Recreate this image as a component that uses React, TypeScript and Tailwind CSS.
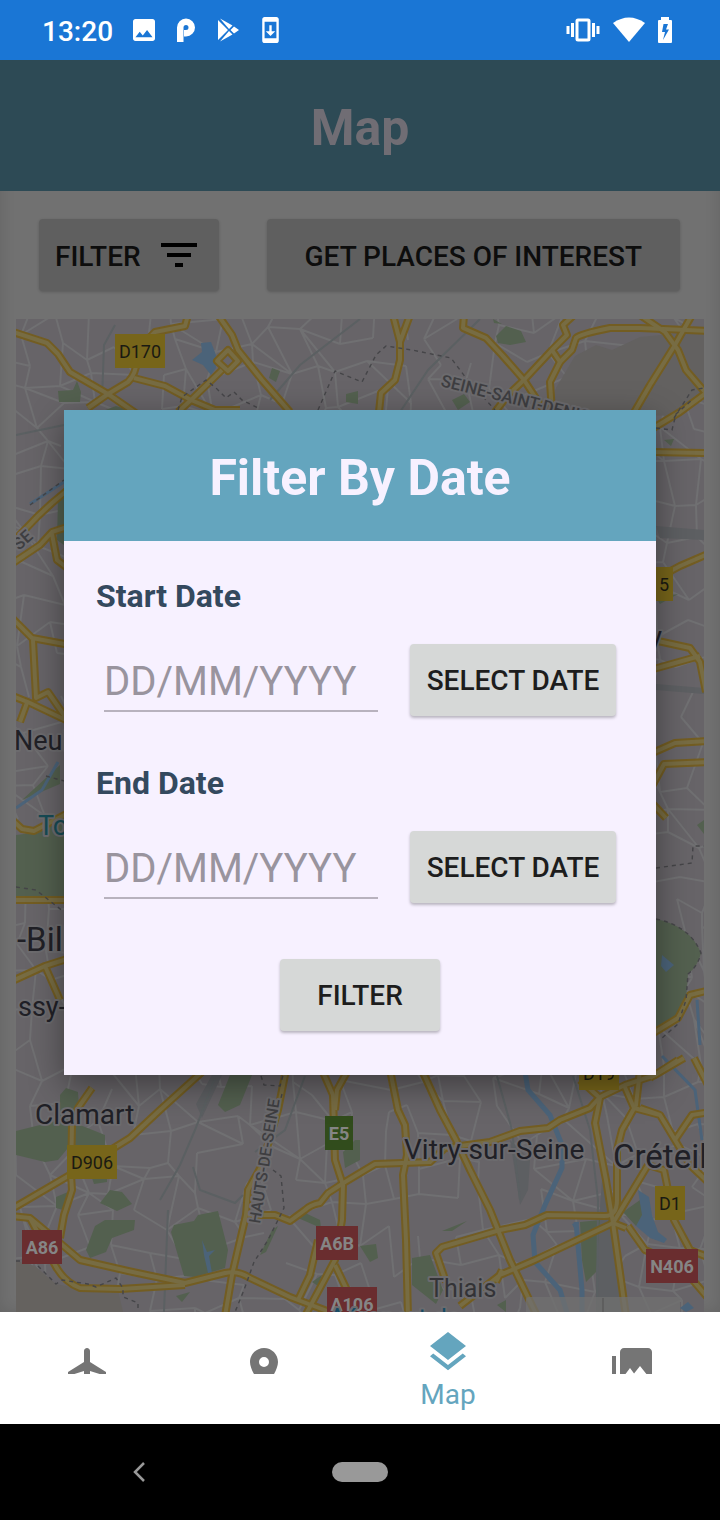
import type { ReactNode } from 'react';
import { MdFilterList, MdFlight, MdImage, MdLayers, MdPhotoLibrary, MdPlace, MdSystemUpdate } from 'react-icons/md';

const majorRoads = [
  'M10 331L47 343L58 354L70 372L108 394L140 416',
  'M88 408L108 394L128 382Q136 374 137 360L142 345L155 332L185 326L188 315',
  'M134 378L165 386L191 400L215 410H240',
  'M218 315L232 335L238 350L262 380L290 412',
  'M228 350L238 361L228 371L217 361Z',
  'M222 370L191 400L178 412',
  'M393 315L400 342M410 315L400 342V360L395 380L381 393L379 412',
  'M464 315L463 328L486 338L502 355L524 380L545 412',
  'M574 315L563 325L567 335L552 350L524 380L508 395L495 412',
  'M552 350L560 362L572 350L576 338Q580 334 610 328H640L710 331',
  'M560 362L550 382L552 412',
  'M692 315L675 345L650 385L632 416',
  'M640 315L665 332L678 350L686 370L710 398',
  'M710 390L680 412L650 430',
  'M10 545L38 516L52 503L70 488M10 565L40 545L52 532L70 526M52 534L57 560L70 570',
  'M10 616L32 638L70 645M33 640L36 698L48 692L66 718M10 695L30 703L70 722M20 722L28 700',
  'M10 818L22 829L34 831L70 812M10 900H70M10 982L45 966L70 958M45 966L60 1000',
  'M650 452L710 453M650 582L680 566L710 553M658 641L690 648L700 662L706 692M650 670L700 656',
  'M650 754L675 743L710 741M650 790L664 764L710 762M652 803L666 818',
  'M650 1035L678 1018L690 995L710 990M650 1078L678 1060M694 1058L708 1085',
  'M202 1072L160 1110L130 1138L75 1172L10 1210',
  'M92 1088L78 1108L72 1125L71 1175L72 1190L64 1215L60 1238',
  'M10 1216L30 1218L60 1243L80 1260L128 1271L185 1283L225 1273Q238 1270 250 1278L290 1297L330 1312',
  'M30 1218L55 1265Q64 1282 80 1288L120 1289L185 1285',
  'M286 1070L278 1110L262 1165L248 1190L246 1215L232 1275L225 1316',
  'M248 1215H275L290 1221L305 1210Q310 1205 320 1203L328 1193L345 1182L375 1164L430 1162L445 1148L490 1142L520 1131L548 1128L560 1120L590 1108L600 1097L625 1085L655 1075L684 1058',
  'M322 1070L333 1095L335 1160L343 1185L342 1220L335 1260L305 1316',
  'M348 1070L337 1090L335 1110M318 1240L310 1275L298 1300M335 1265L348 1292',
  'M390 1070L398 1110L405 1125L407 1155L403 1175L406 1240L408 1316',
  'M422 1070L440 1110L456 1140L470 1170L490 1210L510 1260L537 1316',
  'M446 1282L436 1253L442 1247L500 1230L525 1225L547 1215L605 1216Q617 1216 617 1200V1150L622 1130L636 1105L640 1070',
  'M580 1080L600 1098L595 1123L606 1180L613 1223L626 1316',
  'M613 1223L648 1165M613 1223L535 1260L500 1275L460 1306M496 1282L502 1270',
  'M624 1085L634 1108L660 1115L675 1140L690 1165L710 1184M640 1108L660 1115M675 1140L692 1115L710 1112',
  'M613 1223L626 1228M628 1226L645 1250L680 1265L708 1298M648 1165L664 1170L674 1220L690 1250L710 1258',
];

const dashedBorders = [
  'M178 410L182 397L206 380L216 388L226 398L234 392L242 400L258 408',
  'M318 410L335 371L362 382L376 355L386 346L412 350L451 358L466 378L495 410',
  'M674 418L692 390L704 388M656 428L672 430L676 414L692 400',
  'M30 505L64 480M46 776L64 781M16 887L36 890L64 912',
  'M656 868L692 863L693 846H704M656 919Q690 926 701 953Q698 966 688 974L686 1000L678 1024L662 1038',
  'M261 1076L264 1085L280 1086L284 1072M282 1094L278 1110M273 1170L281 1176L284 1208L268 1240L254 1262L244 1290L235 1312',
  'M16 1261H33L56 1284L62 1280L88 1284L96 1287L116 1278L123 1288V1297L138 1303V1312',
];

const parks = [
  'M58 391L73 390L77 381L81 392L80 402H59Z',
  'M100 412L116 406L135 412ZM272 368L280 371L276 382L269 378Z',
  'M496 336L506 326L521 331L526 342L510 345L498 343ZM346 394L358 391V404L346 402Z',
  'M452 400L464 394L470 402L458 410ZM493 319L502 324L494 323ZM152 329L157 328L154 333Z',
  'M16 835L32 833L64 815V898H16ZM22 800L60 765L60 784ZM58 500L64 495V545L57 540Z',
  'M656 919Q690 926 701 953Q698 966 688 974L686 1000L670 1024L656 1032ZM656 598L678 594L660 604ZM664 440L674 439L671 446ZM697 825L704 820V834Z',
  'M16 1131L60 1120L60 1095L66 1088L78 1092L80 1125L105 1135V1145L68 1148L58 1160L45 1162L16 1155Z',
  'M218 1105L230 1075H252L240 1105L225 1112Z',
  'M56 1197L68 1192L63 1210L56 1208ZM92 1178H107V1182L94 1184Z',
  'M100 1203L110 1190L122 1192L132 1204L117 1211Z',
  'M86 1250L95 1226L105 1220L135 1220L134 1230L112 1238L106 1252L90 1258Z',
  'M171 1232L174 1225L194 1221L198 1215L218 1211L228 1250L225 1268L195 1277L184 1276Z',
  'M298 1218L303 1212L320 1220L321 1228ZM260 1255L272 1230L278 1226L266 1252Z',
  'M343 1152L355 1140H360V1160L345 1168ZM312 1282L322 1275L318 1286ZM176 1296L190 1292L182 1302Z',
  'M412 1258L430 1255L443 1290L436 1304L412 1285ZM442 1231L467 1221L452 1231ZM360 1246L376 1244L378 1258L370 1262Z',
  'M580 1222L600 1220L596 1272L586 1282L582 1260ZM623 1212L640 1200L644 1222L636 1226ZM497 1305L506 1300V1312Z',
];

const water = [
  'M201 343L211 342L216 355L216 368L211 375L203 365L192 360L202 352Z',
  'M638 1190L649 1197L652 1215L658 1232L667 1239L664 1243L650 1238L636 1226L642 1215Z',
  'M202 1240L207 1252L215 1250L209 1256L212 1273H208L204 1255Z',
  'M662 955L674 965L666 972L661 966ZM680 1308L688 1302L694 1308L686 1312Z',
  'M572 1224L579 1222L576 1232Z',
];

function buildStreets() {
  let seed = 47;
  const random = () => {
    seed = (seed * 16807) % 2147483647;
    return seed / 2147483647;
  };
  const step = 31;
  const columns = 27;
  const rows = 36;
  const points = Array.from({ length: rows }, (_, r) =>
    Array.from({ length: columns }, (_, c) => [
      Math.round(c * step - 10 + r * 3 - 90 + (random() - 0.5) * 24),
      Math.round(r * step + 300 - c * 2 + (random() - 0.5) * 24),
    ]),
  );
  let path = '';
  for (let r = 0; r < rows - 1; r += 1) {
    for (let c = 0; c < columns - 1; c += 1) {
      const [x, y] = points[r][c];
      if (random() < 0.72) path += `M${x} ${y}L${points[r][c + 1].join(' ')}`;
      if (random() < 0.72) path += `M${x} ${y}L${points[r + 1][c].join(' ')}`;
      if (random() < 0.1) path += `M${x} ${y}L${points[r + 1][c + 1].join(' ')}`;
    }
  }
  return path;
}

const streets = buildStreets();

const shields = [
  { x: 115, y: 334, w: 50, text: 'D170', fill: '#77651a', ink: '#1a1a12' },
  { x: 640, y: 567, w: 33, text: '5', fill: '#77651a', ink: '#1a1a12', tx: 664 },
  { x: 67, y: 1145, w: 50, text: 'D906', fill: '#77651a', ink: '#1a1a12' },
  { x: 579, y: 1056, w: 40, text: 'D19', fill: '#77651a', ink: '#1a1a12' },
  { x: 655, y: 1186, w: 30, text: 'D1', fill: '#77651a', ink: '#1a1a12' },
  { x: 325, y: 1116, w: 28, text: 'E5', fill: '#314c1c', ink: '#858585' },
  { x: 22, y: 1230, w: 40, text: 'A86', fill: '#6a2d2f', ink: '#858585' },
  { x: 316, y: 1226, w: 42, text: 'A6B', fill: '#6a2d2f', ink: '#858585' },
  { x: 327, y: 1287, w: 50, text: 'A106', fill: '#6a2d2f', ink: '#858585' },
  { x: 646, y: 1249, w: 52, text: 'N406', fill: '#6a2d2f', ink: '#858585' },
];

function CityMap() {
  return (
    <svg viewBox="16 319 688 993" className="block w-full" role="img" aria-label="Map of southern Paris">
      <rect x="16" y="319" width="688" height="993" fill="#676468" />
      <path d={streets} fill="none" stroke="#707072" strokeWidth="2" strokeLinejoin="round" />
      <path d="M548 412L556 388L575 356L596 345L612 350L640 337L704 331V396L675 416Z" fill="#636160" />
      <path d="M16 1261L35 1266L56 1284L80 1289L118 1290L123 1312H16Z" fill="#65625f" />
      <path d="M656 526L704 530V540L660 538ZM656 684L704 688V694L656 690ZM196 1104L212 1075H222L202 1118ZM596 1262L602 1180L612 1225L622 1312H596ZM510 1140L530 1160L528 1190L520 1205Z" fill="#5d5f62" />
      <g fill="#53604f">{parks.map((d) => <path key={d} d={d} />)}</g>
      <g fill="none" stroke="#5b6062" strokeWidth="2">
        <path d="M102 400L104 345L115 325M360 319L300 365L270 400M480 319L428 370L400 412M16 435L64 425M305 1076L285 1130L255 1152M215 1078L195 1130L180 1165L160 1200M168 1210L164 1312M193 1167L200 1190L235 1203L243 1195M497 1076L512 1130L520 1200M573 1076L590 1130L598 1200L597 1312" />
      </g>
      <g fill="#4b6379">{water.map((d) => <path key={d} d={d} />)}</g>
      <g fill="none" stroke="#4b6379">
        <path strokeWidth="5" d="M525 1072L528 1090L550 1115L562 1145L562 1168L545 1205L533 1235L535 1262L560 1290L568 1316M576 1222L582 1290V1316" />
        <path strokeWidth="3" d="M16 808L42 790L58 762M30 504L64 482M662 1056L695 1090L702 1140M697 1000L700 1045" />
      </g>
      <g fill="none" strokeLinejoin="round">
        <g stroke="#735d22" strokeWidth="8">{majorRoads.map((d) => <path key={d} d={d} />)}</g>
        <g stroke="#776c43" strokeWidth="4">{majorRoads.map((d) => <path key={d} d={d} />)}</g>
        <g stroke="#454548" strokeWidth="1.4" strokeDasharray="4 4">{dashedBorders.map((d) => <path key={d} d={d} />)}</g>
      </g>
      <g fontFamily="Roboto, sans-serif" fontSize="18" textAnchor="middle">
        {shields.map((s) => (
          <g key={s.text}>
            <rect x={s.x} y={s.y} width={s.w} height="34" fill={s.fill} />
            <text x={s.tx ?? s.x + s.w / 2} y={s.y + 24} fill={s.ink} fontWeight={s.ink === '#858585' ? 700 : 400}>{s.text}</text>
          </g>
        ))}
      </g>
      <g fontFamily="Roboto, sans-serif" fill="#202026" stroke="#6c6b6e" strokeWidth="4" strokeLinejoin="round" paintOrder="stroke">
        <text x="14" y="750" fontSize="27">Neuilly</text>
        <text x="38" y="835" fontSize="27" fill="#174b55">Tour</text>
        <text x="17" y="951" fontSize="33">-Billancourt</text>
        <text x="18" y="1016" fontSize="27">ssy-les</text>
        <text x="662" y="646" fontSize="28" textAnchor="end">Montreuil-y</text>
        <text x="35" y="1124" fontSize="28">Clamart</text>
        <text x="404" y="1159" fontSize="28">Vitry-sur-Seine</text>
        <text x="613" y="1168" fontSize="33">Créteil</text>
        <text x="429" y="1297" fontSize="25" fill="#333336">Thiais</text>
        <text x="329" y="1327" fontSize="25" fill="#174b65">Aéroport de</text>
        <g fill="#3e3e41" fontWeight="500">
          <text transform="translate(440 386) rotate(14)" fontSize="17">SEINE-SAINT-DENIS</text>
          <text transform="translate(260 1224) rotate(-81)" fontSize="16">HAUTS-DE-SEINE</text>
          <text transform="translate(19 551) rotate(-42)" fontSize="17">SE</text>
        </g>
      </g>
      <rect x="526" y="1297" width="154" height="40" rx="3" fill="#707070" fillOpacity="0.75" />
      <path d="M603 1298V1312" stroke="#5e5e5e" strokeWidth="2" />
    </svg>
  );
}

function StatusBar() {
  return (
    <header className="flex h-[60px] shrink-0 items-center justify-between bg-[#1a76d5] pr-12 pl-[42px] text-white">
      <div className="flex items-center gap-5">
        <span className="pt-[3px] text-[28px] leading-8 font-medium">13:20</span>
        <div className="flex items-center gap-[22px]">
          <MdImage viewBox="3 3 18 18" className="size-[22px]" />
          <svg viewBox="0 0 18 24" className="h-6 w-[18px]" fill="none" stroke="currentColor" strokeWidth="6.5">
            <path d="M3.250 24V9.500A5.750 5.750 0 1 1 9 15.250H7" />
          </svg>
          <svg viewBox="0 0 23 24" className="h-6 w-[23px]" fill="currentColor">
            <path d="M1 2L11 12L1 22ZM3 .5L15.500 7.500L12 11ZM3 23.500L15.500 16.500L12 13ZM17 8.500L22 12L17 15.500L13.500 12Z" />
          </svg>
          <MdSystemUpdate viewBox="5 1 14 22" className="h-[26px] w-[17px]" />
        </div>
      </div>
      <div className="flex items-center gap-[13px]">
        <svg viewBox="0 0 34 24" className="h-6 w-[34px]" fill="none" stroke="currentColor" strokeWidth="3">
          <rect x="11" y="2" width="12" height="20" rx="1" />
          <path d="M6.500 5V19M2 8V16M27.500 5V19M32 8V16" />
        </svg>
        <svg viewBox="0 0 32 26" className="h-[26px] w-8" fill="currentColor">
          <path d="M0 6Q16 -5 32 6L16 25Z" />
        </svg>
        <svg viewBox="0 0 14 26" className="h-[26px] w-[14px]" fill="currentColor">
          <path fillRule="evenodd" d="M3 3V0H11V3H13Q14 3 14 4V25Q14 26 13 26H1Q0 26 0 25V4Q0 3 1 3ZM5.500 7L4 15H7L5 23L11 12.500H8L10 7Z" />
        </svg>
      </div>
    </header>
  );
}

const raised = 'flex h-[72px] items-center justify-center rounded-[4px] text-[28px] leading-8 font-medium';
const light = 'bg-[#d6d8d7] text-[#1d1d1d] shadow-[0_2px_3px_rgba(0,0,0,0.25)]';
const dimmed = 'bg-[#5f5f5f] text-[#0d0d0d] shadow-[0_1px_3px_rgba(0,0,0,0.2)]';

function DateField({ id, label }: { id: string; label: string }) {
  return (
    <div>
      <label htmlFor={id} className="block text-[32px] leading-[38px] font-bold text-[#34495e]">{label}</label>
      <div className="mt-[29px] flex items-center gap-8 pl-2">
        <input
          id={id}
          type="text"
          placeholder="DD/MM/YYYY"
          className="h-16 w-0 min-w-0 flex-1 border-b-2 border-[#b8b2be] bg-transparent pt-1.5 text-[40px] text-[#34495e] outline-none placeholder:text-[#99949e]"
        />
        <button type="button" className={`${raised} ${light} w-[206px] pt-[3px]`}>SELECT DATE</button>
      </div>
    </div>
  );
}

function FilterDialog() {
  return (
    <section role="dialog" aria-labelledby="dialog-title" className="w-full bg-[#f7f1ff] shadow-[0_10px_32px_rgba(0,0,0,0.4)]">
      <h2 id="dialog-title" className="flex h-[131px] items-center justify-center bg-[#64a5be] pt-1.5 text-[50px] font-bold text-[#f7f1ff]">
        Filter By Date
      </h2>
      <form className="flex flex-col gap-12 pt-9 pr-10 pb-11 pl-8" onSubmit={(e) => e.preventDefault()}>
        <DateField id="start-date" label="Start Date" />
        <DateField id="end-date" label="End Date" />
        <div className="flex justify-center pt-2 pl-2">
          <button type="submit" className={`${raised} ${light} w-40 pt-[3px]`}>FILTER</button>
        </div>
      </form>
    </section>
  );
}

function InactiveTab({ label, children }: { label: string; children: ReactNode }) {
  return (
    <a href="#" aria-label={label} className="flex flex-1 justify-center pt-8 text-[#757575]">
      <span className="block h-[30px] overflow-hidden">{children}</span>
    </a>
  );
}

export default function App() {
  return (
    <div className="flex min-h-screen flex-col bg-[#717171] font-['Roboto',sans-serif]">
      <StatusBar />
      <div className="relative flex flex-1 flex-col">
        <main className="flex-1 shadow-[inset_0_0_16px_rgba(0,0,0,0.12)]">
          <h1 className="flex h-[131px] items-center justify-center bg-[#2d4a55] pt-1.5 text-[50px] font-bold text-[#706d74]">Map</h1>
          <div className="flex gap-12 py-7 pr-10 pl-[39px]">
            <button type="button" className={`${raised} ${dimmed} gap-[14px] px-4`}>
              <span className="pt-[3px]">FILTER</span>
              <MdFilterList className="size-12 text-black" />
            </button>
            <button type="button" className={`${raised} ${dimmed} flex-1 pt-[3px]`}>GET PLACES OF INTEREST</button>
          </div>
          <div className="px-4">
            <CityMap />
          </div>
        </main>
        <nav className="flex h-28 shrink-0 bg-white">
          <InactiveTab label="Trips"><MdFlight className="size-12" /></InactiveTab>
          <InactiveTab label="Places"><MdPlace className="size-12" /></InactiveTab>
          <a href="#" aria-current="page" className="flex w-48 flex-col items-center pt-4 text-[28px] leading-8 text-[#64a5be]">
            <MdLayers className="size-12" />
            <span className="pt-[3px]">Map</span>
          </a>
          <InactiveTab label="Gallery"><MdPhotoLibrary className="size-12" /></InactiveTab>
        </nav>
        <div className="absolute inset-0 flex items-center px-16">
          <FilterDialog />
        </div>
      </div>
      <footer className="grid h-24 shrink-0 grid-cols-[278px_1fr_278px] items-center bg-black text-[#999999]">
        <button type="button" aria-label="Back" className="flex h-12 items-center justify-center">
          <svg viewBox="0 0 12 20" className="h-5 w-3" fill="none" stroke="currentColor" strokeWidth="2.500">
            <path d="M11 1L2 10L11 19" />
          </svg>
        </button>
        <button type="button" aria-label="Home" className="mx-auto h-5 w-14 rounded-full bg-[#999999]" />
      </footer>
    </div>
  );
}
